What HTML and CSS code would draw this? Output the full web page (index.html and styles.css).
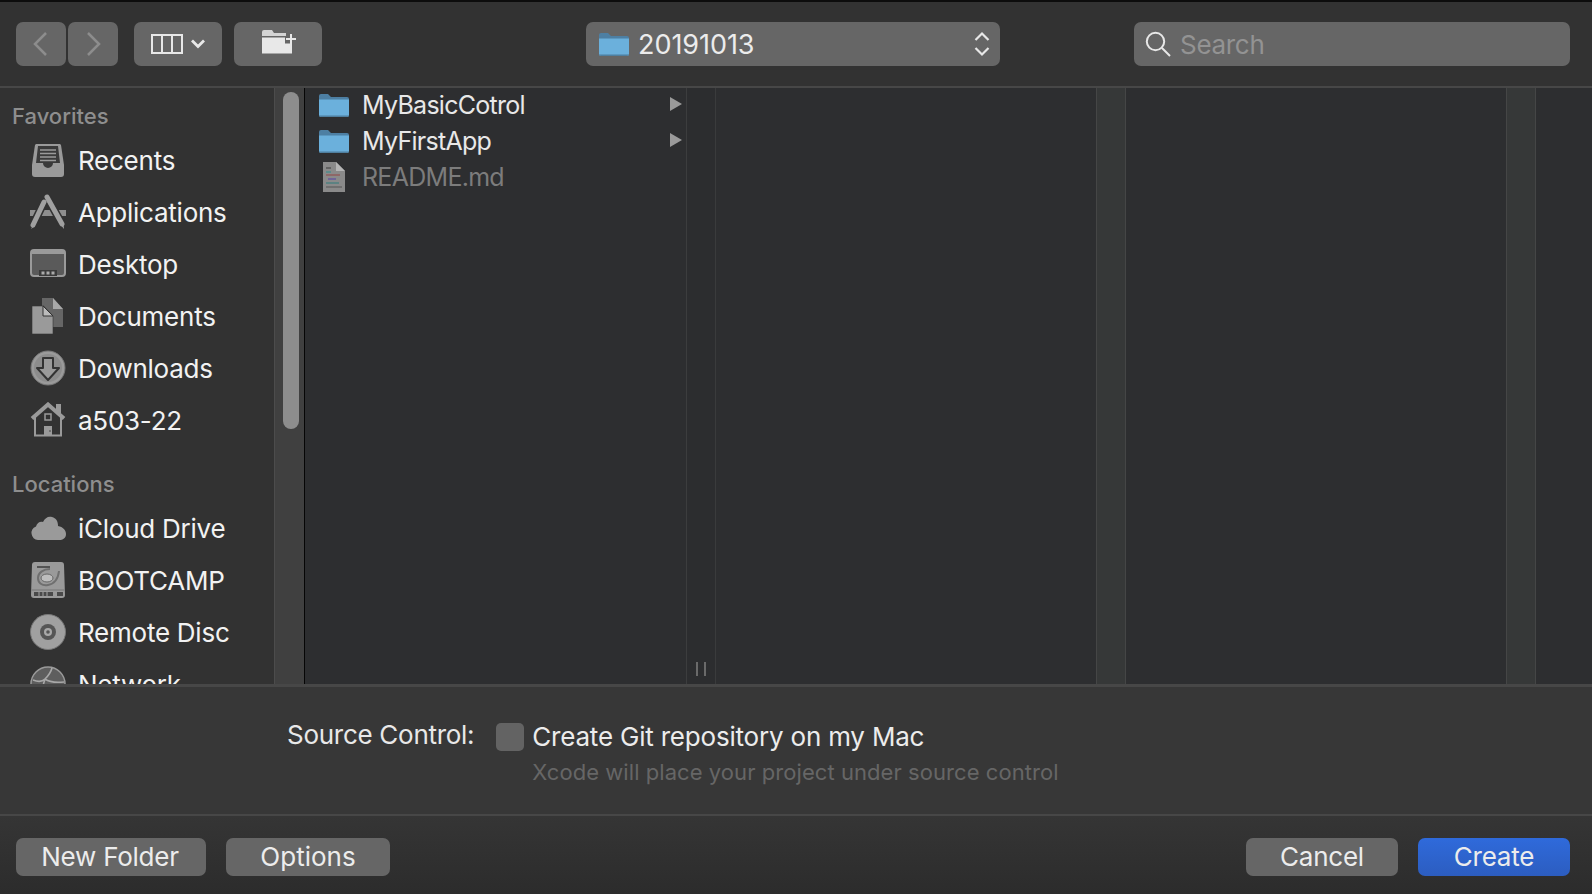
FILE: index.html
```html
<!DOCTYPE html>
<html lang="en">
<head>
<meta charset="utf-8">
<title>Save dialog</title>
<link rel="stylesheet" href="styles.css">
</head>
<body>
<svg class="defs" width="0" height="0">
  <defs>
    <symbol id="folder" viewBox="0 0 30 24">
      <path d="M0 3a2 2 0 0 1 2-2h7l3 3h16a2 2 0 0 1 2 2v4H0z" fill="#4d7fa3"/>
      <path d="M0 6.500h30V22a2 2 0 0 1-2 2H2a2 2 0 0 1-2-2z" fill="#6bb0dc"/>
      <path d="M0 22.500h30V22a2 2 0 0 1-2 2H2a2 2 0 0 1-2-2z" fill="#4f7f9f"/>
    </symbol>
  </defs>
</svg>
<div class="dialog">
  <header class="toolbar">
    <div class="btn nav"><svg width="18" height="26" viewBox="0 0 18 26"><path d="M14 2 3 13l11 11" class="st-dim"/></svg></div>
    <div class="btn nav next"><svg width="18" height="26" viewBox="0 0 18 26"><path d="M4 2l11 11L4 24" class="st-dim"/></svg></div>
    <div class="btn view">
      <svg width="32" height="20" viewBox="0 0 32 20"><path d="M1 1h30v18H1zM11 1v18M21 1v18" class="st-light"/></svg>
      <svg width="14" height="10" viewBox="0 0 14 10"><path d="M1 1.500 7 7.500 13 1.500" class="st-chev"/></svg>
    </div>
    <div class="btn newfolder">
      <svg width="36" height="26" viewBox="0 0 36 26"><path d="M0 7V3a2 2 0 0 1 2-2h8l2 3h12v3z" fill="#d4d4d4"/><path d="M0 8.500H23v6h7v10H0z" fill="#e8e8e8"/><path d="M29 5v10M24 10h10" stroke="#e8e8e8" stroke-width="2" fill="none"/></svg>
    </div>
    <div class="btn popup">
      <svg class="popup-folder" width="30" height="24"><use href="#folder"/></svg>
      <span class="popup-text">20191013</span>
      <svg class="updown" width="16" height="26" viewBox="0 0 16 26"><path d="M1.500 9 8 2.500 14.500 9M1.500 17 8 23.500 14.500 17" class="st-chev2"/></svg>
    </div>
    <div class="btn search">
      <svg width="26" height="26" viewBox="0 0 26 26"><circle cx="10.500" cy="10.500" r="8.700" class="st-light"/><path d="M17 17l8 8" class="st-light"/></svg>
      <span class="search-text">Search</span>
    </div>
  </header>

  <main class="main">
    <nav class="sidebar">
      <div class="side-list">
        <div class="side-head">Favorites</div>
        <div class="side-row">
          <svg class="side-ico" viewBox="0 0 36 36"><path d="M6 2h24l1 1 3 20v9a3 3 0 0 1-3 3H5a3 3 0 0 1-3-3v-9L5 3z" fill="#9a9a9a"/><path d="M8 4h20l2 17h-7a5 5 0 0 1-10 0H6z" fill="#3a3a3a"/><path d="M10 8h16M10 11.500h16M10 15h16M10 18.500h16" stroke="#9a9a9a" stroke-width="1.700"/></svg>
          <span>Recents</span>
        </div>
        <div class="side-row">
          <svg class="side-ico" viewBox="0 0 36 36"><path d="M0 16h36v6H0z" fill="#8e8e8e"/><path d="M14 8 2.500 32M17 3l15.500 28" stroke="#323232" stroke-width="8" fill="none"/><path d="M14 8 3 31" stroke="#a0a0a0" stroke-width="5" stroke-linecap="round" fill="none"/><path d="M3 31l-2 4 4-3z" fill="#a0a0a0"/><path d="M17 3l15 27" stroke="#a0a0a0" stroke-width="5" stroke-linecap="round" fill="none"/><path d="M30 30l4 5-.5-6z" fill="#a0a0a0"/></svg>
          <span>Applications</span>
        </div>
        <div class="side-row">
          <svg class="side-ico" viewBox="0 0 36 30"><rect x="1" y="1" width="34" height="26" rx="3" fill="#5a5a5a" stroke="#9a9a9a" stroke-width="2"/><path d="M1 3a2 2 0 0 1 2-2h30a2 2 0 0 1 2 2v2H1z" fill="#9a9a9a"/><path d="M9 21h18v6H9z" fill="#3a3a3a"/><path d="M11.500 22.500h3v3h-3zM16.500 22.500h3v3h-3zM21.500 22.500h3v3h-3z" fill="#aaa"/></svg>
          <span>Desktop</span>
        </div>
        <div class="side-row">
          <svg class="side-ico" viewBox="0 0 36 36"><path d="M12 0h11l10 11v18H12z" fill="#666"/><path d="M23 0v11h10z" fill="#a8a8a8"/><path d="M2 8h12l9 10v18H2z" fill="#9a9a9a" stroke="#333" stroke-width=".6"/><path d="M13 8v10h10z" fill="#bbb" stroke="#333" stroke-width="1"/></svg>
          <span>Documents</span>
        </div>
        <div class="side-row">
          <svg class="side-ico" viewBox="0 0 36 36"><circle cx="18" cy="18" r="17" fill="#9a9a9a" stroke="#777" stroke-width="1"/><circle cx="18" cy="18" r="14" fill="#8c8c8c"/><path d="M13 8h10v10h6L18 30 7 18h6z" fill="#9a9a9a" stroke="#333" stroke-width="2" stroke-linejoin="round"/></svg>
          <span>Downloads</span>
        </div>
        <div class="side-row">
          <svg class="side-ico" viewBox="0 0 36 36"><path d="M26 2h5v9h-5z" fill="#9a9a9a"/><path d="M2 16.500 18 2.500l16 14" fill="none" stroke="#9a9a9a" stroke-width="4"/><path d="M5 15v18.500h26V15" fill="none" stroke="#9a9a9a" stroke-width="2"/><path d="M15 12h6v6h-6z" fill="none" stroke="#9a9a9a" stroke-width="1.500"/><path d="M14 24h8v10h-8z" fill="#9a9a9a"/><path d="M19.500 28h1v2h-1z" fill="#444"/></svg>
          <span>a503-22</span>
        </div>
        <div class="side-head second">Locations</div>
        <div class="side-row">
          <svg class="side-ico" viewBox="0 0 36 26"><path d="M8 25a7 7 0 0 1-2-13.500C7 8 10 6 13 7c2-4 5-6 9-5 4 1 6 4 6 9 5 1 8 4 8 8 0 4-3 6-7 6z" fill="#9a9a9a"/></svg>
          <span>iCloud Drive</span>
        </div>
        <div class="side-row">
          <svg class="side-ico" viewBox="0 0 36 36"><path d="M5 0h26a3 3 0 0 1 3 3l1 30a3 3 0 0 1-3 3H4a3 3 0 0 1-3-3L2 3a3 3 0 0 1 3-3z" fill="#9a9a9a"/><path d="M7 5h13" stroke="#3a3a3a" stroke-width="1.500"/><path d="M20 7c-7 0-12 4-12 9s4 8 10 7 10-5 11-14" fill="none" stroke="#6f6f6f" stroke-width="2"/><ellipse cx="17" cy="16" rx="6" ry="4" fill="#bdbdbd" stroke="#666"/><path d="M1.500 28h33" stroke="#777"/><path d="M4 30h19v4H4zM27 30h6v4h-6z" fill="#4a4a4a"/><path d="M9 30v4M13 30v4M17 30v4" stroke="#a5a5a5"/></svg>
          <span>BOOTCAMP</span>
        </div>
        <div class="side-row">
          <svg class="side-ico" viewBox="0 0 36 36"><circle cx="18" cy="18" r="17.500" fill="#a0a0a0" stroke="#777"/><circle cx="18" cy="18" r="8" fill="#555"/><circle cx="18" cy="18" r="4" fill="#a8a8a8"/><circle cx="18" cy="18" r="1.800" fill="#555"/></svg>
          <span>Remote Disc</span>
        </div>
        <div class="side-row">
          <svg class="side-ico" viewBox="0 0 36 36"><circle cx="18" cy="18" r="17" fill="#5e5e5e" stroke="#9a9a9a" stroke-width="1.500"/><path d="M3 14c5 2 9 2 12-1s6-7 7-11M15 13c4 3 9 4 19 3M15 13c-2 6-3 12-7 19" fill="none" stroke="#a8a8a8" stroke-width="1.600"/></svg>
          <span>Network</span>
        </div>
      </div>
      <div class="side-track"><div class="side-thumb"></div></div>
    </nav>

    <section class="browser">
      <div class="col col-first">
        <div class="file-row">
          <svg class="file-ico" width="30" height="24"><use href="#folder"/></svg>
          <span class="file-name">MyBasicCotrol</span>
          <svg class="disclose" width="12" height="14" viewBox="0 0 12 14"><path d="M0 0l12 7L0 14z"/></svg>
        </div>
        <div class="file-row">
          <svg class="file-ico" width="30" height="24"><use href="#folder"/></svg>
          <span class="file-name">MyFirstApp</span>
          <svg class="disclose" width="12" height="14" viewBox="0 0 12 14"><path d="M0 0l12 7L0 14z"/></svg>
        </div>
        <div class="file-row dim">
          <svg class="file-ico" width="30" height="30" viewBox="0 0 30 30"><path d="M4 0h13l9 9v21H4z" fill="#8a8a8a"/><path d="M17 0l9 9h-9z" fill="#b5b5b5"/><path d="M7 6h5" stroke="#555" stroke-width="1.500"/><path d="M7 10h5" stroke="#4d8b8b" stroke-width="1.500"/><path d="M7 13h14" stroke="#8f5b5b" stroke-width="1.500"/><path d="M9 17h8" stroke="#67579b" stroke-width="1.500"/><path d="M7 21h13" stroke="#4d7f7f" stroke-width="1.500"/><path d="M7 25h16" stroke="#666" stroke-width="1.500"/></svg>
          <span class="file-name">README.md</span>
        </div>
      </div>
      <div class="track track-first"><span class="grip"></span><span class="grip"></span></div>
      <div class="col col-mid"></div>
      <div class="track"></div>
      <div class="col col-mid"></div>
      <div class="track"></div>
      <div class="col-rest"></div>
    </section>
  </main>

  <section class="options">
    <div class="opt-label">Source Control:</div>
    <div class="opt-check"></div>
    <div class="opt-text">
      <div class="opt-main">Create Git repository on my Mac</div>
      <div class="opt-sub">Xcode will place your project under source control</div>
    </div>
  </section>

  <footer class="footer">
    <div class="btn fbtn newf">New Folder</div>
    <div class="btn fbtn opts">Options</div>
    <div class="btn fbtn cancel">Cancel</div>
    <div class="btn fbtn create">Create</div>
  </footer>
</div>
</body>
</html>
```

FILE: styles.css
```css
* { box-sizing: border-box; }
html, body { margin: 0; padding: 0; }
body {
  width: 1592px;
  height: 894px;
  overflow: hidden;
  background: #323232;
  font-family: Inter, "Noto Sans", sans-serif;
  color: #f0f0f0;
}
.defs { display: block; height: 0; }
.dialog {
  display: flex;
  flex-direction: column;
  height: 894px;
  border-top: 2px solid #0c0c0c;
}
.st-dim { fill: none; stroke: #8d8d8d; stroke-width: 2.500; }
.st-light { fill: none; stroke: #e8e8e8; stroke-width: 2; }
.st-chev { fill: none; stroke: #e8e8e8; stroke-width: 2.800; }
.st-chev2 { fill: none; stroke: #e8e8e8; stroke-width: 2.200; }

.toolbar {
  flex: none;
  height: 86px;
  padding: 20px 22px 0 16px;
  display: flex;
  align-items: flex-start;
  background: #323232;
  border-bottom: 2px solid #474747;
}
.btn {
  height: 44px;
  background: #666;
  border-radius: 7px;
  display: flex;
  align-items: center;
  justify-content: center;
}
.nav { width: 50px; }
.next { margin-left: 2px; }
.view { width: 88px; margin-left: 16px; gap: 8px; }
.newfolder { width: 88px; margin-left: 12px; padding: 0 0 4px 4px; }
.popup {
  width: 414px;
  margin-left: 264px;
  padding: 0 10px 0 13px;
  justify-content: flex-start;
}
.popup-text { margin-left: 9px; font-size: 27px; letter-spacing: -0.05px; color: #ececec; }
.updown { margin-left: auto; }
.search {
  width: 436px;
  margin-left: 134px;
  padding-left: 11px;
  justify-content: flex-start;
}
.search-text { margin-left: 9px; font-size: 26px; letter-spacing: -0.3px; color: #939393; }

.main {
  flex: none;
  height: 596px;
  display: flex;
  overflow: hidden;
}
.sidebar {
  flex: none;
  width: 305px;
  display: flex;
  background: #323232;
  border-right: 1px solid #060606;
}
.side-list {
  width: 274px;
  flex: none;
  padding-top: 12px;
  overflow: hidden;
}
.side-head {
  height: 34px;
  padding-left: 12px;
  font-size: 22px;
  font-weight: 500;
  line-height: 32px;
  color: #8e8e8e;
}
.side-head.second { margin-top: 22px; height: 34px; }
.side-row {
  height: 52px;
  padding-left: 30px;
  display: flex;
  align-items: center;
  gap: 12px;
  font-size: 26px;
  letter-spacing: -0.25px;
  color: #f2f2f2;
}
.side-ico { width: 36px; height: 36px; flex: none; }
.side-track {
  flex: 1;
  padding: 4px 5px 0 8px;
  background: #404040;
  border-left: 1px solid #4c4c4c;
}
.side-thumb { height: 337px; border-radius: 8px; background: #8d8d8d; }

.browser { flex: 1; display: flex; background: #2d2e30; }
.col { flex: none; }
.col-first { width: 382px; padding: 0 4px 0 14px; border-right: 1px solid #3c3d3e; }
.col-mid { width: 381px; border-right: 1px solid #454646; }
.track {
  flex: none;
  width: 29px;
  background: #363838;
  border-right: 1px solid #454646;
}
.track-first {
  background: #2c2d2f;
  border-right-color: #3a3b3c;
  display: flex;
  justify-content: center;
  align-items: flex-end;
  gap: 6px;
  padding-bottom: 8px;
}
.grip { width: 2px; height: 14px; background: #6a6a6a; }
.col-rest { flex: 1; }
.file-row {
  height: 36px;
  display: flex;
  align-items: center;
  font-size: 25px;
  letter-spacing: -0.72px;
  color: #e8e8e8;
}
.file-row:first-child { margin-top: -1px; }
.file-ico { flex: none; }
.file-name { margin-left: 13px; }
.disclose { margin: -2px 0 0 auto; fill: #9a9a9a; }
.dim { color: #7c7c7c; }

.options {
  flex: none;
  height: 130px;
  display: flex;
  align-items: flex-start;
  background: #373737;
  border-top: 3px solid #474747;
  padding: 31px 0 0 287px;
}
.opt-label { font-size: 26px; letter-spacing: -0.28px; color: #e8e8e8; line-height: 34px; }
.opt-check {
  width: 28px;
  height: 28px;
  margin: 5px 8px 0 22px;
  background: #636363;
  border-radius: 5px;
  flex: none;
}
.opt-main { font-size: 26px; letter-spacing: -0.2px; color: #ececec; line-height: 34px; margin-top: 2px; }
.opt-sub { font-size: 22px; letter-spacing: 0.06px; color: #666; line-height: 30px; margin-top: 3px; }

.footer {
  flex: 1;
  min-height: 0;
  display: flex;
  align-items: flex-start;
  padding: 22px 22px 0 16px;
  background: linear-gradient(#353535, #2c2c2c);
  border-top: 2px solid #474747;
}
.fbtn { height: 38px; font-size: 26px; letter-spacing: -0.25px; color: #ececec; padding-bottom: 2px; }
.newf { width: 190px; padding-right: 2px; }
.opts { width: 164px; margin-left: 20px; letter-spacing: 0; }
.cancel { width: 152px; margin-left: auto; }
.create { width: 152px; margin-left: 20px; background: linear-gradient(#2f6adb, #2c5dc0); }
```
